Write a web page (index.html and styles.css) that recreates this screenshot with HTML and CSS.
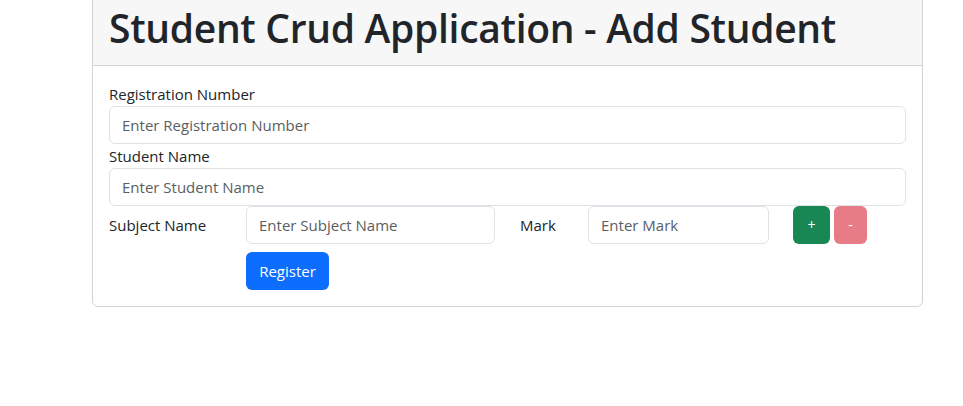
FILE: index.html
```html
<!DOCTYPE html>
<html lang="en">
<head>
<meta charset="utf-8">
<title>Student Crud Application - Add Student</title>
<link rel="stylesheet" href="styles.css">
</head>
<body>
<div class="page">
  <div class="card">
    <div class="card-header">
      <h1 class="title">Student Crud Application - Add Student</h1>
    </div>
    <div class="card-body">
      <div class="field">
        <label class="label">Registration Number</label>
        <input class="input" type="text" placeholder="Enter Registration Number">
      </div>
      <div class="field">
        <label class="label">Student Name</label>
        <input class="input" type="text" placeholder="Enter Student Name">
      </div>
      <div class="subject-row">
        <label class="inline-label subject-label">Subject Name</label>
        <input class="input subject-input" type="text" placeholder="Enter Subject Name">
        <label class="inline-label mark-label">Mark</label>
        <input class="input mark-input" type="text" placeholder="Enter Mark">
        <div class="btn-group">
          <button class="btn btn-add" type="button">+</button>
          <button class="btn btn-remove" type="button">-</button>
        </div>
      </div>
      <div class="actions">
        <button class="btn btn-register" type="button">Register</button>
      </div>
    </div>
  </div>
</div>
</body>
</html>
```
FILE: styles.css
```css
* { box-sizing: border-box; }
html, body { margin: 0; padding: 0; background: #fff; }
body {
  font-family: "Open Sans", "Noto Sans", "Liberation Sans", sans-serif;
  font-size: 15px;
  line-height: 24px;
  color: #212529;
}
.page {
  padding: 0 40px 0 92px;
}
.card {
  margin-top: -9px;
  border: 1px solid #d3d3d3;
  border-radius: 6px;
  background: #fff;
}
.card-header {
  background: #f7f7f7;
  border-bottom: 1px solid #d3d3d3;
  border-radius: 5px 5px 0 0;
  padding: 9px 16px 10px;
}
.title {
  margin: 0;
  font-size: 39px;
  line-height: 54px;
  font-weight: 600;
  letter-spacing: -0.3px;
}
.card-body {
  padding: 16px;
}
.label {
  display: block;
  height: 24px;
}
.input {
  display: block;
  width: 100%;
  height: 38px;
  padding: 6px 12px;
  font: inherit;
  color: #212529;
  border: 1px solid #dee2e6;
  border-radius: 6px;
  background: #fff;
  outline: none;
}
.input::placeholder { color: #595e63; opacity: 1; }
.subject-row {
  display: flex;
  align-items: center;
}
.inline-label { flex: none; }
.subject-label { width: 137px; }
.subject-input { width: 249px; flex: none; }
.mark-label { width: 68px; margin-left: 25px; }
.mark-input { width: 181px; flex: none; }
.btn-group {
  display: flex;
  gap: 4px;
  margin-left: 24px;
}
.btn {
  font: inherit;
  border: 0;
  border-radius: 6px;
  color: #fff;
  cursor: pointer;
}
.btn-add, .btn-remove {
  height: 38px;
  font-size: 14px;
  padding: 0;
}
.btn-add { width: 37px; background: #198754; }
.btn-remove { width: 33px; background: #e77c86; }
.actions {
  padding-left: 137px;
  margin-top: 8px;
}
.btn-register {
  height: 38px;
  width: 83px;
  font-size: 15px;
  background: #0d6efd;
}
```
